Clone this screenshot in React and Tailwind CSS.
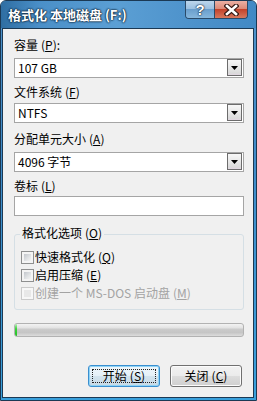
const Key = ({ k }) => (
  <span className="ml-[3px]">
    (<span className="underline underline-offset-[1px]">{k}</span>)
  </span>
);

const Label = ({ text, k, colon, className = "" }) => (
  <div className={`h-[16px] leading-[16px] text-[12px] ${className}`}>
    {text}
    <Key k={k} />
    {colon ? ":" : ""}
  </div>
);

const Combo = ({ value, className = "" }) => (
  <div className={`h-[20px] flex border border-[#a5a5a5] bg-white pl-[3px] pr-[1px] pt-0 ${className}`}>
    <span className="flex-1 self-center text-[12px] leading-[16px]">{value}</span>
    <div className="w-[15px] h-[17px] flex items-center justify-center border border-[#6c6c6c] bg-[linear-gradient(#f7f7f7,#e8e8e8_50%,#dadada_88%,#e3d6e3)]">
      <svg width="7" height="4" viewBox="0 0 7 4">
        <path d="M0 0h7L3.5 4z" fill="#000" />
      </svg>
    </div>
  </div>
);

const Check = ({ label, k, disabled }) => (
  <div className="h-[18px] flex items-center">
    <div
      className={`w-[13px] h-[13px] border p-[2px] ${
        disabled ? "border-[#cacaca] bg-[#f7f7f7]" : "border-[#8e8f8f] bg-[#f4f4f4]"
      }`}
    >
      <div
        className={`w-full h-full ${
          disabled
            ? "bg-[#e8e8e8]"
            : "bg-[linear-gradient(135deg,#c3c7cc,#e2e4e6_60%,#f4f4f4)]"
        }`}
      />
    </div>
    <span className={`ml-[1px] text-[12px] leading-[16px] ${disabled ? "text-[#a3a3a3]" : ""}`}>
      {label}
      <Key k={k} />
    </span>
  </div>
);

const Btn = ({ label, k, focused }) => (
  <div
    className={`relative w-[72px] h-[22px] rounded-[3px] border flex items-center justify-center text-[12px] leading-[16px] ${
      focused
        ? "border-[#3a8fd0] shadow-[inset_0_0_0_1px_#8fd3f5] bg-[linear-gradient(#eef6fb,#e4eff7_50%,#d2e3ee_50%,#c8dae6)]"
        : "border-[#707070] shadow-[inset_0_0_0_1px_#fcfcfc] bg-[linear-gradient(#f2f2f2,#ebebeb_50%,#dddddd_50%,#cfcfcf)]"
    }`}
  >
    {focused && <span className="absolute inset-[3px] border border-dotted border-[#222]" />}
    {label}
    <Key k={k} />
  </div>
);

export default function App() {
  return (
    <div className="w-[257px] h-[401px] flex flex-col border border-[#1b3954] rounded-t-[6px] overflow-hidden bg-[linear-gradient(#4f93cb,#3f8bc9_40%,#39a0dc)] font-['Noto_Sans_CJK_SC',sans-serif] text-black">
      {/* title bar */}
      <div className="h-[27px] flex items-start pl-[7px] pr-[8px] bg-[linear-gradient(90deg,#2f6ea2,#4a8fc8_15%,#5b9fd4_45%,#4d92cb_75%,#4189c5)]">
        <div className="self-center text-white font-bold text-[13px] leading-[16px] [text-shadow:0_0_2px_#0d2438,0_0_2px_#0d2438,0_0_1px_#0d2438]">
          格式化 本地磁盘 (F:)
        </div>
        <div className="ml-auto flex h-[18px] border border-t-0 border-[#2a4a68] rounded-b-[4px] overflow-hidden">
          <div className="w-[29px] flex items-center justify-center border-r border-[#2a4a68] bg-[linear-gradient(#bcd6ec,#9cc1e1_45%,#6a9fcd_50%,#86b7dd)]">
            <span className="text-white font-bold text-[15px] leading-[16px] font-['Liberation_Sans',sans-serif] [text-shadow:0_0_1px_#1c3147,0_0_1px_#1c3147,0_0_2px_#1c3147]">
              ?
            </span>
          </div>
          <div className="w-[32px] flex items-center justify-center bg-[linear-gradient(#eab0a4,#dc8a78_45%,#c4432b_50%,#d8785d)]">
            <svg width="15" height="12" viewBox="0 0 15 12">
              <path d="M3 2l9 8M12 2l-9 8" stroke="#3a1d18" strokeWidth="5" strokeLinecap="square" />
              <path d="M3 2l9 8M12 2l-9 8" stroke="#fff" strokeWidth="2.6" strokeLinecap="square" />
            </svg>
          </div>
        </div>
      </div>

      {/* body */}
      <div className="flex-1 ml-[1px] mr-[2px] mb-[2px] border border-[#1b3954] bg-[#f0f0f0] pt-[8px] pl-[11px] pr-[9px] flex flex-col">
        <Label text="容量" k="P" colon />
        <Combo value="107 GB" className="mt-[5px]" />
        <Label text="文件系统" k="F" className="mt-[6px]" />
        <Combo value="NTFS" className="mt-[3px]" />
        <Label text="分配单元大小" k="A" className="mt-[8px]" />
        <Combo value="4096 字节" className="mt-[5px]" />
        <Label text="卷标" k="L" className="mt-[6px]" />
        <div className="mt-[2px] h-[20px] border border-[#a5a5a5] bg-white" />

        <div className="relative mt-[18px] h-[76px] border border-[#d5dfe5] rounded-[3px] pt-[13px] pl-[6px]">
          <span className="absolute -top-[10px] left-[5px] px-[2px] bg-[#f0f0f0] text-[12px] leading-[16px]">
            格式化选项
            <Key k="O" />
          </span>
          <Check label="快速格式化" k="Q" />
          <Check label="启用压缩" k="E" />
          <Check label="创建一个 MS-DOS 启动盘" k="M" disabled />
        </div>

        <div className="mt-[13px] h-[14px] rounded-[3px] border border-[#b2b2b2] flex overflow-hidden bg-[linear-gradient(#f3f3f3,#e4e4e4_30%,#cbcbcb_45%,#c5c5c5_70%,#dcdcdc)]">
          <div className="w-[2px] bg-[linear-gradient(#b8f0b8,#3ed33e_40%,#22bf22)]" />
        </div>

        <div className="mt-[28px] flex justify-end gap-[10px] pr-[2px]">
          <Btn label="开始" k="S" focused />
          <Btn label="关闭" k="C" />
        </div>
      </div>
    </div>
  );
}
